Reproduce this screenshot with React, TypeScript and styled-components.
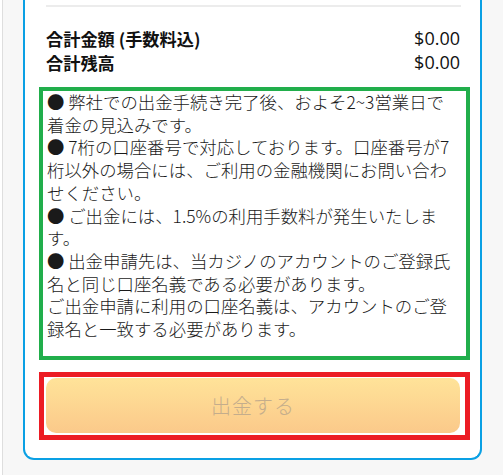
import * as React from 'react'
import styled, { createGlobalStyle } from 'styled-components'

const GlobalStyle = createGlobalStyle`
  html, body {
    margin: 0;
    padding: 0;
    background: #ffffff;
  }
  body {
    font-family: "Noto Sans CJK JP", "Noto Sans", sans-serif;
    color: #111111;
  }
`

const NOTES = [
  '● 弊社での出金手続き完了後、およそ2~3営業日で着金の見込みです。',
  '● 7桁の口座番号で対応しております。口座番号が7桁以外の場合には、ご利用の金融機関にお問い合わせください。',
  '● ご出金には、1.5%の利用手数料が発生いたします。',
  '● 出金申請先は、当カジノのアカウントのご登録氏名と同じ口座名義である必要があります。',
  'ご出金申請に利用の口座名義は、アカウントのご登録名と一致する必要があります。',
]

const TOTALS = [
  { label: '合計金額 (手数料込)', value: '$0.00' },
  { label: '合計残高', value: '$0.00' },
]

export default function App() {
  return (
    <>
      <GlobalStyle />
      <Page>
        <Card>
          <Divider />
          <Totals>
            {TOTALS.map(row => (
              <TotalRow key={row.label}>
                <TotalLabel>{row.label}</TotalLabel>
                <TotalValue>{row.value}</TotalValue>
              </TotalRow>
            ))}
          </Totals>

          <Notes>
            {NOTES.map(note => (
              <Note key={note}>{note}</Note>
            ))}
          </Notes>

          <SubmitFrame>
            <SubmitButton disabled>出金する</SubmitButton>
          </SubmitFrame>
        </Card>
      </Page>
    </>
  )
}

const Page = styled.div`
  margin-left: 2px;
  border-left: 1px solid #dedede;
  background: #f7f7f7;
  min-height: 475px;
  padding: 0 21px 14px 20px;
  box-sizing: border-box;
`

const Card = styled.div`
  background: #ffffff;
  border: 2px solid #0aa0e4;
  border-top: 0;
  border-radius: 0 0 11px 11px;
  padding: 5px 10px 18px 14px;
`

const Divider = styled.div`
  height: 2px;
  background: #ececec;
  margin: 0 9px 0 7px;
`

const Totals = styled.div`
  display: flex;
  flex-direction: column;
  padding: 19px 10px 0 7px;
`

const TotalRow = styled.div`
  display: flex;
  justify-content: space-between;
  align-items: center;
  height: 24px;
`

const TotalLabel = styled.span`
  font-size: 17.2px;
  font-weight: 700;
  color: #111111;
`

const TotalValue = styled.span`
  font-family: "Open Sans", "DejaVu Sans", sans-serif;
  font-size: 18px;
  font-weight: 400;
  color: #111111;
`

const Notes = styled.div`
  margin-top: 13px;
  border: 4px solid #21ae4b;
  padding: 0 12px 15px 4px;
`

const Note = styled.p`
  margin: 0;
  font-size: 17.4px;
  font-weight: 300;
  line-height: 22.7px;
  color: #1a1a1a;
`

const SubmitFrame = styled.div`
  margin-top: 12px;
  border: 5px solid #ec1c24;
  padding: 1px 5px 2px 2px;
`

const SubmitButton = styled.button`
  display: block;
  width: 100%;
  height: 55px;
  border: 0;
  border-radius: 10px;
  background: linear-gradient(180deg, #ffe399 0%, #fbc98a 100%);
  color: #c4ad8c;
  font-family: inherit;
  font-size: 20px;
  font-weight: 300;
  letter-spacing: 1px;
  cursor: default;
`
